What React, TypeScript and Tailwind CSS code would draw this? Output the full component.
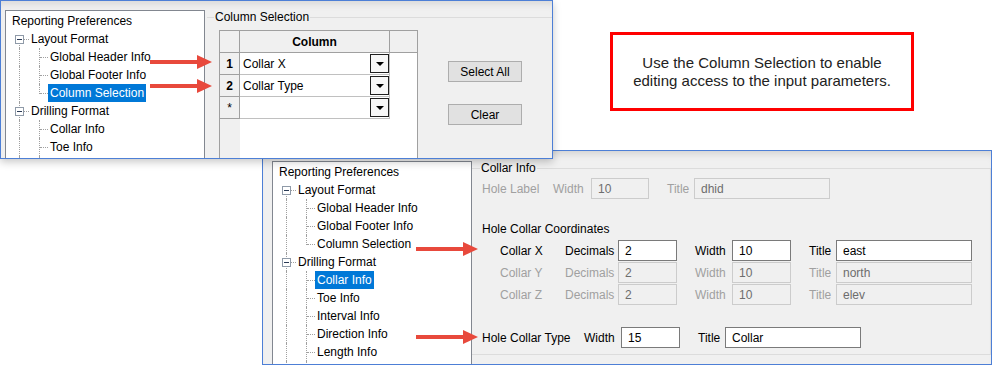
import React from "react";

type TreeItem = {
  label: string;
  level: 0 | 1 | 2;
  selected?: boolean;
  first?: boolean;
  last?: boolean;
};

const topTree: TreeItem[] = [
  { label: "Reporting Preferences", level: 0 },
  { label: "Layout Format", level: 1, first: true },
  { label: "Global Header Info", level: 2 },
  { label: "Global Footer Info", level: 2 },
  { label: "Column Selection", level: 2, selected: true, last: true },
  { label: "Drilling Format", level: 1 },
  { label: "Collar Info", level: 2 },
  { label: "Toe Info", level: 2 },
  { label: "", level: 2 },
];

const bottomTree: TreeItem[] = [
  { label: "Reporting Preferences", level: 0 },
  { label: "Layout Format", level: 1, first: true },
  { label: "Global Header Info", level: 2 },
  { label: "Global Footer Info", level: 2 },
  { label: "Column Selection", level: 2, last: true },
  { label: "Drilling Format", level: 1 },
  { label: "Collar Info", level: 2, selected: true },
  { label: "Toe Info", level: 2 },
  { label: "Interval Info", level: 2 },
  { label: "Direction Info", level: 2 },
  { label: "Length Info", level: 2 },
  { label: "", level: 2 },
];

function TreeRow({ item }: { item: TreeItem }) {
  const pad = item.level === 0 ? "pl-[4px]" : item.level === 1 ? "pl-[23px]" : "pl-[42px]";
  return (
    <div className={`relative flex h-[18px] items-center ${pad}`}>
      {item.level >= 1 && (
        <span
          className={`absolute left-[13px] w-0 border-l border-dotted border-[#a0a0a0] ${
            item.first ? "top-[9px] bottom-0" : "top-0 bottom-0"
          }`}
        />
      )}
      {item.level === 2 && (
        <>
          <span
            className={`absolute left-[33px] top-0 w-0 border-l border-dotted border-[#a0a0a0] ${
              item.last ? "h-[10px]" : "bottom-0"
            }`}
          />
          <span className="absolute left-[34px] top-[9px] h-0 w-[8px] border-t border-dotted border-[#a0a0a0]" />
        </>
      )}
      {item.level === 1 && (
        <>
          <span className="absolute left-[18px] top-[9px] h-0 w-[5px] border-t border-dotted border-[#a0a0a0]" />
          <span className="absolute left-[9px] top-[5px] flex h-[9px] w-[9px] items-center justify-center border border-[#8f9aa8] bg-white">
            <span className="h-px w-[5px] bg-[#2a3a55]" />
          </span>
        </>
      )}
      {item.label && (
        <span
          className={`px-[2px] leading-[18px] ${
            item.selected ? "bg-[#0078d7] text-white" : "text-black"
          }`}
        >
          {item.label}
        </span>
      )}
    </div>
  );
}

function Tree({ items, className }: { items: TreeItem[]; className: string }) {
  return (
    <div className={`w-[200px] shrink-0 border border-[#828790] bg-white pt-[1px] ${className}`}>
      {items.map((item, i) => (
        <TreeRow key={i} item={item} />
      ))}
    </div>
  );
}

function DropButton() {
  return (
    <div className="flex h-[19px] w-[19px] items-center justify-center border border-[#1e1e1e] bg-[#f7f7f7]">
      <svg width="8" height="4" viewBox="0 0 8 4">
        <path d="M0 0h8L4 4z" fill="#000" />
      </svg>
    </div>
  );
}

function GridRow({ head, value, bold }: { head: string; value: string; bold?: boolean }) {
  return (
    <div className="flex h-[22px] shrink-0">
      <div
        className={`flex w-[20px] items-center justify-center border-b border-r border-[#a0a0a0] bg-[#f0f0f0] ${
          bold ? "font-bold" : ""
        }`}
      >
        {head}
      </div>
      <div className="flex w-[150px] items-center justify-between border-b border-r border-[#c0c0c0] pl-[3px]">
        <span>{value}</span>
        <DropButton />
      </div>
    </div>
  );
}

function Field({ value, w, disabled }: { value: string; w: string; disabled?: boolean }) {
  return (
    <div
      className={`flex h-[21px] shrink-0 items-center border pl-[6px] ${w} ${
        disabled ? "border-[#cccccc] bg-[#f0f0f0] text-[#6d6d6d]" : "border-[#7a7a7a] bg-white text-black"
      }`}
    >
      {value}
    </div>
  );
}

function CoordRow({ axis, dec, width, title, disabled }: { axis: string; dec: string; width: string; title: string; disabled?: boolean }) {
  const lab = disabled ? "text-[#a0a0a0]" : "text-black";
  return (
    <div className={`flex h-[22px] items-start pl-[28px] ${lab}`}>
      <span className="flex h-[21px] w-[65px] shrink-0 items-center">{axis}</span>
      <span className="flex h-[21px] w-[53px] shrink-0 items-center">Decimals</span>
      <Field value={dec} w="w-[59px]" disabled={disabled} />
      <span className="ml-[18px] flex h-[21px] w-[37px] shrink-0 items-center">Width</span>
      <Field value={width} w="w-[59px]" disabled={disabled} />
      <span className="ml-[18px] flex h-[21px] w-[27px] shrink-0 items-center">Title</span>
      <Field value={title} w="w-[136px]" disabled={disabled} />
    </div>
  );
}

function Arrow({ className }: { className: string }) {
  return (
    <svg className={`absolute ${className}`} width="62" height="14" viewBox="0 0 62 14">
      <rect x="0" y="5" width="49" height="4" fill="#e8493c" />
      <path d="M47 0L62 7L47 14Z" fill="#e8493c" />
    </svg>
  );
}

export default function App() {
  return (
    <div className="relative h-[366px] w-[992px] overflow-hidden bg-white text-[12px] font-['Liberation_Sans',Arial,sans-serif] text-black">
      {/* lower window: Collar Info */}
      <div className="absolute left-[262px] top-[150px] flex h-[215px] w-[730px] overflow-hidden border border-[#4d7fd6] bg-[#f0f0f0] shadow-[inset_0_8px_8px_-6px_rgba(0,0,0,0.15)]">
        <Tree items={bottomTree} className="ml-[9px] mt-[10px] h-[230px]" />
        <div className="relative mt-[17px] flex h-[187px] flex-1 flex-col border-y border-r border-[#dcdcdc]">
          <span className="absolute -top-[8px] left-[8px] bg-[#f0f0f0] px-[1px] leading-[14px]">Collar Info</span>
          <div className="mt-[9px] flex h-[21px] items-center pl-[10px] text-[#a0a0a0]">
            <span className="w-[71px] shrink-0">Hole Label</span>
            <span className="w-[38px] shrink-0">Width</span>
            <Field value="10" w="w-[58px]" disabled />
            <span className="ml-[18px] w-[27px] shrink-0">Title</span>
            <Field value="dhid" w="w-[136px]" disabled />
          </div>
          <div className="mt-[22px] flex h-[16px] items-center pl-[10px]">Hole Collar Coordinates</div>
          <div className="mt-[3px] flex flex-col">
            <CoordRow axis="Collar X" dec="2" width="10" title="east" />
            <CoordRow axis="Collar Y" dec="2" width="10" title="north" disabled />
            <CoordRow axis="Collar Z" dec="2" width="10" title="elev" disabled />
          </div>
          <div className="mt-[21px] flex h-[21px] items-center pl-[10px]">
            <span className="w-[102px] shrink-0">Hole Collar Type</span>
            <span className="w-[37px] shrink-0">Width</span>
            <Field value="15" w="w-[59px]" />
            <span className="ml-[18px] w-[27px] shrink-0">Title</span>
            <Field value="Collar" w="w-[136px]" />
          </div>
        </div>
      </div>

      {/* upper window: Column Selection */}
      <div className="absolute left-0 top-0 flex h-[159px] w-[553px] overflow-hidden border border-[#4d7fd6] bg-[#f0f0f0] shadow-[0_3px_8px_rgba(0,0,0,0.22),inset_0_8px_8px_-6px_rgba(0,0,0,0.12)]">
        <Tree items={topTree} className="ml-[4px] mt-[9px] h-[170px]" />
        <div className="relative ml-[2px] mt-[16px] flex-1 border-t border-[#dcdcdc]">
          <span className="absolute -top-[8px] left-[7px] bg-[#f0f0f0] px-[1px] leading-[14px]">Column Selection</span>
          <div className="mt-[12px] flex">
            <div className="ml-[12px] flex h-[140px] w-[199px] flex-col border border-[#a0a0a0] bg-white">
              <div className="flex h-[22px] shrink-0 border-b border-[#a0a0a0] bg-[#f0f0f0]">
                <div className="w-[20px] border-r border-[#a0a0a0]" />
                <div className="flex w-[150px] items-center justify-center border-r border-[#a0a0a0] font-bold">Column</div>
              </div>
              <GridRow head="1" value="Collar X" bold />
              <GridRow head="2" value="Collar Type" bold />
              <GridRow head="*" value="" />
              <div className="flex flex-1">
                <div className="w-[20px] bg-[#f0f0f0]" />
              </div>
            </div>
            <div className="ml-[30px] flex flex-col">
              <button className="mt-[31px] h-[21px] w-[74px] border border-[#adadad] bg-[#e1e1e1]">Select All</button>
              <button className="mt-[22px] h-[21px] w-[74px] border border-[#adadad] bg-[#e1e1e1]">Clear</button>
            </div>
          </div>
        </div>
      </div>

      {/* annotation */}
      <div className="absolute left-[610px] top-[32px] flex h-[79px] w-[304px] flex-col items-center justify-center border-[3px] border-[#ff0000] bg-white text-[15px] leading-[18px] text-[#222]">
        <p>Use the Column Selection to enable</p>
        <p>editing access to the input parameters.</p>
      </div>

      <Arrow className="left-[150px] top-[55px]" />
      <Arrow className="left-[150px] top-[79px]" />
      <Arrow className="left-[416px] top-[242px]" />
      <Arrow className="left-[416px] top-[330px]" />
    </div>
  );
}
